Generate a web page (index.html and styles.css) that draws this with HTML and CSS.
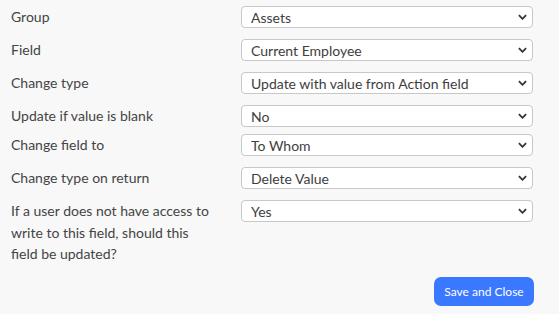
FILE: index.html
```html
<!DOCTYPE html>
<html>
<head>
<meta charset="utf-8">
<link rel="stylesheet" href="styles.css">
</head>
<body>
<div class="form">
  <div class="row">
    <label class="label">Group</label>
    <div class="field"><select class="select"><option>Assets</option></select><svg class="chev" viewBox="0 0 10 6"><path d="M1 1 L5 5 L9 1"/></svg></div>
  </div>
  <div class="row">
    <label class="label">Field</label>
    <div class="field"><select class="select"><option>Current Employee</option></select><svg class="chev" viewBox="0 0 10 6"><path d="M1 1 L5 5 L9 1"/></svg></div>
  </div>
  <div class="row">
    <label class="label">Change type</label>
    <div class="field"><select class="select"><option>Update with value from Action field</option></select><svg class="chev" viewBox="0 0 10 6"><path d="M1 1 L5 5 L9 1"/></svg></div>
  </div>
  <div class="row row-tight">
    <label class="label">Update if value is blank</label>
    <div class="field"><select class="select"><option>No</option></select><svg class="chev" viewBox="0 0 10 6"><path d="M1 1 L5 5 L9 1"/></svg></div>
  </div>
  <div class="row">
    <label class="label">Change field to</label>
    <div class="field"><select class="select"><option>To Whom</option></select><svg class="chev" viewBox="0 0 10 6"><path d="M1 1 L5 5 L9 1"/></svg></div>
  </div>
  <div class="row">
    <label class="label">Change type on return</label>
    <div class="field"><select class="select"><option>Delete Value</option></select><svg class="chev" viewBox="0 0 10 6"><path d="M1 1 L5 5 L9 1"/></svg></div>
  </div>
  <div class="row">
    <label class="label">If a user does not have access to write to this field, should this field be updated?</label>
    <div class="field"><select class="select"><option>Yes</option></select><svg class="chev" viewBox="0 0 10 6"><path d="M1 1 L5 5 L9 1"/></svg></div>
  </div>
  <div class="actions">
    <button class="btn">Save and Close</button>
  </div>
</div>
</body>
</html>
```
FILE: styles.css
```css
html, body {
  margin: 0;
  padding: 0;
  background: #f8f8f8;
}
body {
  font-family: Lato, "Open Sans", sans-serif;
  font-size: 14px;
  color: #444;
}
.form {
  padding: 6px 26px 0 11px;
  display: flex;
  flex-direction: column;
}
.row {
  display: grid;
  grid-template-columns: 200px 1fr;
  column-gap: 30px;
  align-items: start;
  margin-bottom: 11px;
}
.row-tight {
  margin-bottom: 7px;
}
.label {
  line-height: 21.5px;
}
.field {
  position: relative;
  height: 22px;
}
.select {
  -webkit-appearance: none;
  appearance: none;
  width: 100%;
  height: 22px;
  box-sizing: border-box;
  border: 1px solid #c8c8c8;
  border-radius: 4px;
  background: #fff;
  font-family: Lato, "Open Sans", sans-serif;
  font-size: 14px;
  color: #3e3e3e;
  padding: 0 24px 0 9px;
  margin: 0;
  outline: none;
}
.chev {
  position: absolute;
  right: 6px;
  top: 8px;
  width: 9px;
  height: 6px;
  fill: none;
  stroke: #333;
  stroke-width: 2;
  pointer-events: none;
}
.actions {
  display: flex;
  justify-content: flex-end;
  margin-top: 1px;
}
.btn {
  width: 100px;
  height: 29px;
  border: none;
  border-radius: 7px;
  background: #3a78ff;
  color: #fff;
  font-family: Lato, "Open Sans", sans-serif;
  font-size: 12px;
  padding: 0;
  margin-right: -1px;
}
```
